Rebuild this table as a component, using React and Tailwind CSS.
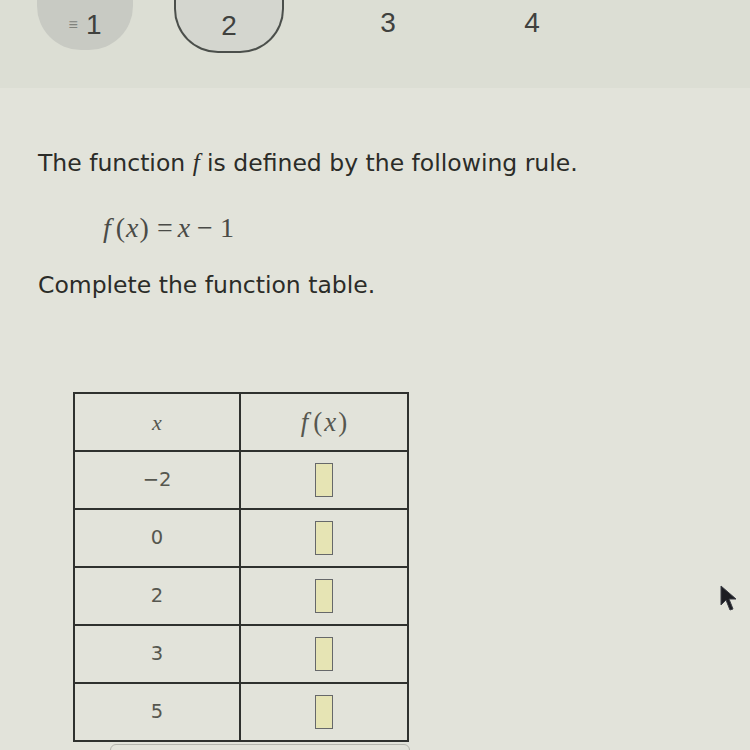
import React from 'react';

const rows = ['−2', '0', '2', '3', '5'];

const App = () => {
  return (
    <div className="relative w-[750px] h-[750px] overflow-hidden bg-[#e2e3da] text-[#2b2c28]" style={{ fontFamily: '"DejaVu Sans", Verdana, sans-serif' }}>
      {/* step tabs */}
      <div className="h-[88px] bg-[#dcded4]">
        <div className="flex items-start pl-[37px]" style={{ fontFamily: '"Liberation Sans", Arial, sans-serif' }}>
          <div className="w-[96px] h-[50px] rounded-b-[44px] bg-[#c8cac3] flex items-center justify-center gap-[8px] text-[28px] text-[#40413e]">
            <span className="text-[16px] text-[#80827c]">≡</span>
            <span>1</span>
          </div>
          <div className="ml-[41px] w-[110px] h-[53px] rounded-b-[44px] border-[2px] border-t-0 border-[#4b4f4b] bg-[#d4d6cf] flex items-center justify-center text-[28px] text-[#40413e]">
            2
          </div>
          <div className="ml-[94px] w-[20px] h-[46px] flex items-center justify-center text-[28px] text-[#40413e]">3</div>
          <div className="ml-[124px] w-[20px] h-[46px] flex items-center justify-center text-[28px] text-[#40413e]">4</div>
        </div>
      </div>

      {/* question */}
      <div className="pl-[38px] pt-[61px]">
        <p className="text-[23.5px] leading-[28px]">
          The function <span className="italic text-[25px]" style={{ fontFamily: '"Liberation Serif", serif' }}>f</span> is defined by the following rule.
        </p>
        <p className="mt-[35px] ml-[65px] text-[28px] leading-[32px] text-[#4a4b47]" style={{ fontFamily: '"Liberation Serif", "Times New Roman", serif' }}>
          <span className="italic">f</span>
          <span className="ml-[5px]">(</span>
          <span className="italic mx-[1px]">x</span>)
          <span className="ml-[8px] mr-[5px]">=</span>
          <span className="italic">x</span>
          <span className="mx-[7px]">−</span>1
        </p>
        <p className="mt-[27px] text-[23.5px] leading-[28px]">Complete the function table.</p>
      </div>

      {/* function table */}
      <div className="absolute left-[73px] top-[392px]">
        <table className="border-collapse border-[2px] border-[#2f312e] text-[#56574f]">
          <thead>
            <tr className="h-[58px]">
              <th className="w-[166px] border-[2px] border-[#2f312e] font-normal text-[22px] italic" style={{ fontFamily: '"Liberation Serif", serif' }}>x</th>
              <th className="w-[168px] border-[2px] border-[#2f312e] font-normal text-[27px]" style={{ fontFamily: '"Liberation Serif", serif' }}>
                <span className="italic">f</span>
                <span className="ml-[5px]">(</span>
                <span className="italic mx-[2px]">x</span>)
              </th>
            </tr>
          </thead>
          <tbody>
            {rows.map((r) => (
              <tr key={r} className="h-[58px]">
                <td className="border-[2px] border-[#2f312e] text-center text-[19.5px]">{r}</td>
                <td className="border-[2px] border-[#2f312e]">
                  <div className="ml-[74px] w-[18px] h-[34px] border-[1.5px] border-[#66686a] bg-[#e6e4b4]" />
                </td>
              </tr>
            ))}
          </tbody>
        </table>
      </div>

      {/* partial box below table */}
      <div className="absolute left-[110px] top-[744px] w-[300px] h-[30px] rounded-t-[6px] border border-[#b4b5ad]" />

      {/* mouse cursor */}
      <svg className="absolute left-[719px] top-[585px]" width="22" height="28" viewBox="0 0 22 28">
        <path d="M2 1 L2 20 L7 15 L11 25 L14 24 L10 14 L17 14 Z" fill="#1c1d22" stroke="#3b3d44" strokeWidth="1" />
      </svg>
    </div>
  );
};

export default App;
